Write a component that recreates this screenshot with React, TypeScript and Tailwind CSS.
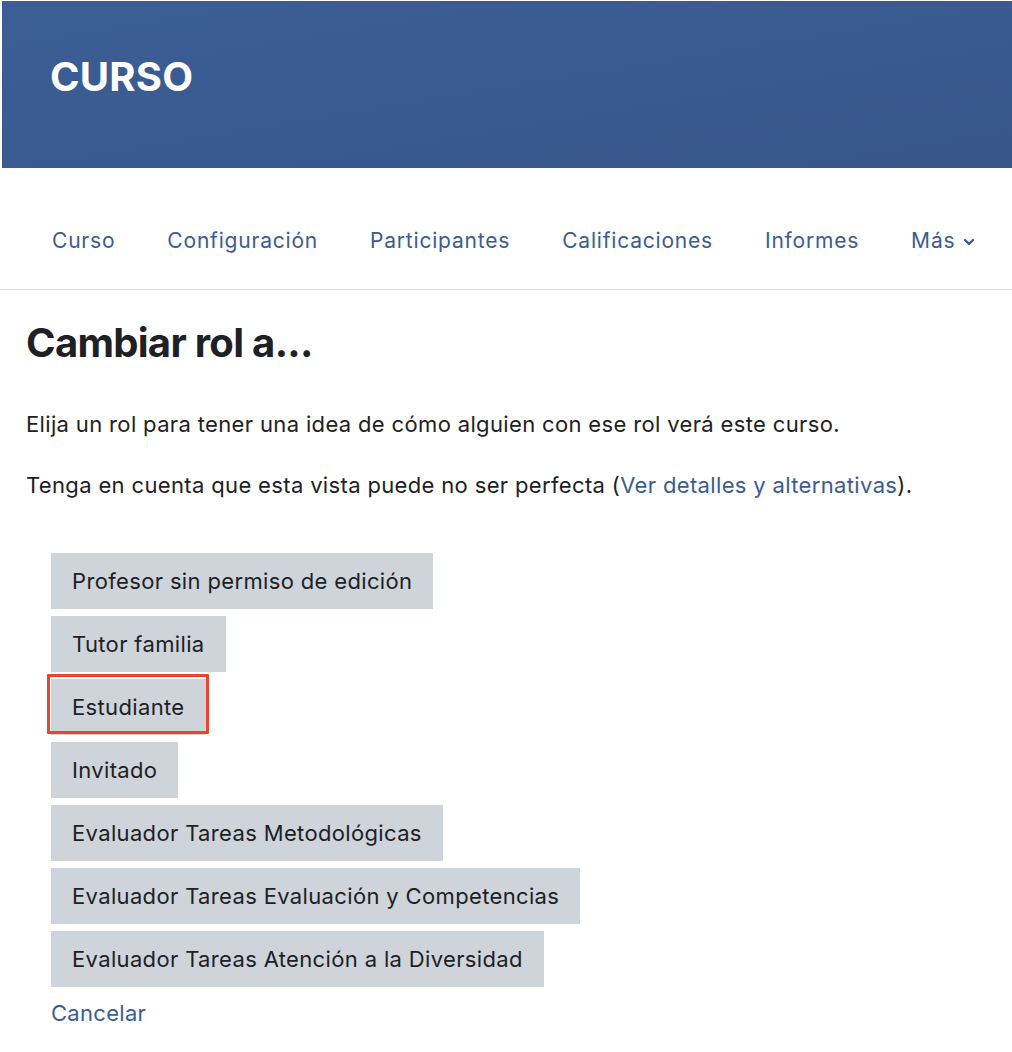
import React from "react";

const roles = [
  "Profesor sin permiso de edición",
  "Tutor familia",
  "Estudiante",
  "Invitado",
  "Evaluador Tareas Metodológicas",
  "Evaluador Tareas Evaluación y Competencias",
  "Evaluador Tareas Atención a la Diversidad",
];

const navItems = ["Curso", "Configuración", "Participantes", "Calificaciones", "Informes"];

export default function App() {
  return (
    <div
      className="w-[1012px] h-[1052px] bg-white overflow-hidden text-[#1d2125]"
      style={{ fontFamily: "Inter, 'Noto Sans', sans-serif" }}
    >
      <div className="pt-px pl-[2px]">
        <div className="h-[167px] bg-gradient-to-br from-[#3b5e96] to-[#375789] flex items-center pl-[48px]">
          <h1 className="text-white font-bold text-[40px] leading-none tracking-[0.2px] -mt-[16px]">CURSO</h1>
        </div>
      </div>

      <nav className="h-[122px] border-b border-[#dee2e6] flex items-center pl-[52px]">
        <div className="flex items-center gap-[52px] text-[21px] tracking-[0.8px] text-[#3a5c93] pt-[24px]">
          {navItems.map((n) => (
            <span key={n}>{n}</span>
          ))}
          <span className="flex items-center gap-[8px]">
            Más
            <svg width="12" height="12" viewBox="0 0 12 12" className="mt-[2px]">
              <path d="M2 4 L6 8 L10 4" stroke="#3a5c93" strokeWidth="2.4" fill="none" strokeLinecap="round" strokeLinejoin="round" />
            </svg>
          </span>
        </div>
      </nav>

      <div className="pl-[26px]">
        <h2 className="font-bold text-[40px] leading-none mt-[33px] tracking-[-0.7px]">Cambiar rol a...</h2>
        <p className="text-[22px] tracking-[0.35px] mt-[46px] leading-[30px]">
          Elija un rol para tener una idea de cómo alguien con ese rol verá este curso.
        </p>
        <p className="text-[22px] tracking-[0.35px] mt-[31px] leading-[30px]">
          Tenga en cuenta que esta vista puede no ser perfecta (
          <span className="text-[#3a5c93]">Ver detalles y alternativas</span>).
        </p>

        <div className="mt-[53px] pl-[25px] flex flex-col items-start gap-[7px]">
          {roles.map((r) => (
            <div key={r} className="relative">
              <div className="h-[56px] bg-[#ced4da] px-[21px] flex items-center text-[22px] tracking-[0.35px] text-[#1d2125]">
                {r}
              </div>
              {r === "Estudiante" && (
                <div className="absolute left-[-4px] top-[-5px] right-[-3px] h-[60px] border-[3px] border-[#e8452c] rounded-[1px]" />
              )}
            </div>
          ))}
          <span className="text-[22px] tracking-[0.3px] text-[#3a5c93] mt-[3px]">Cancelar</span>
        </div>
      </div>
    </div>
  );
}
